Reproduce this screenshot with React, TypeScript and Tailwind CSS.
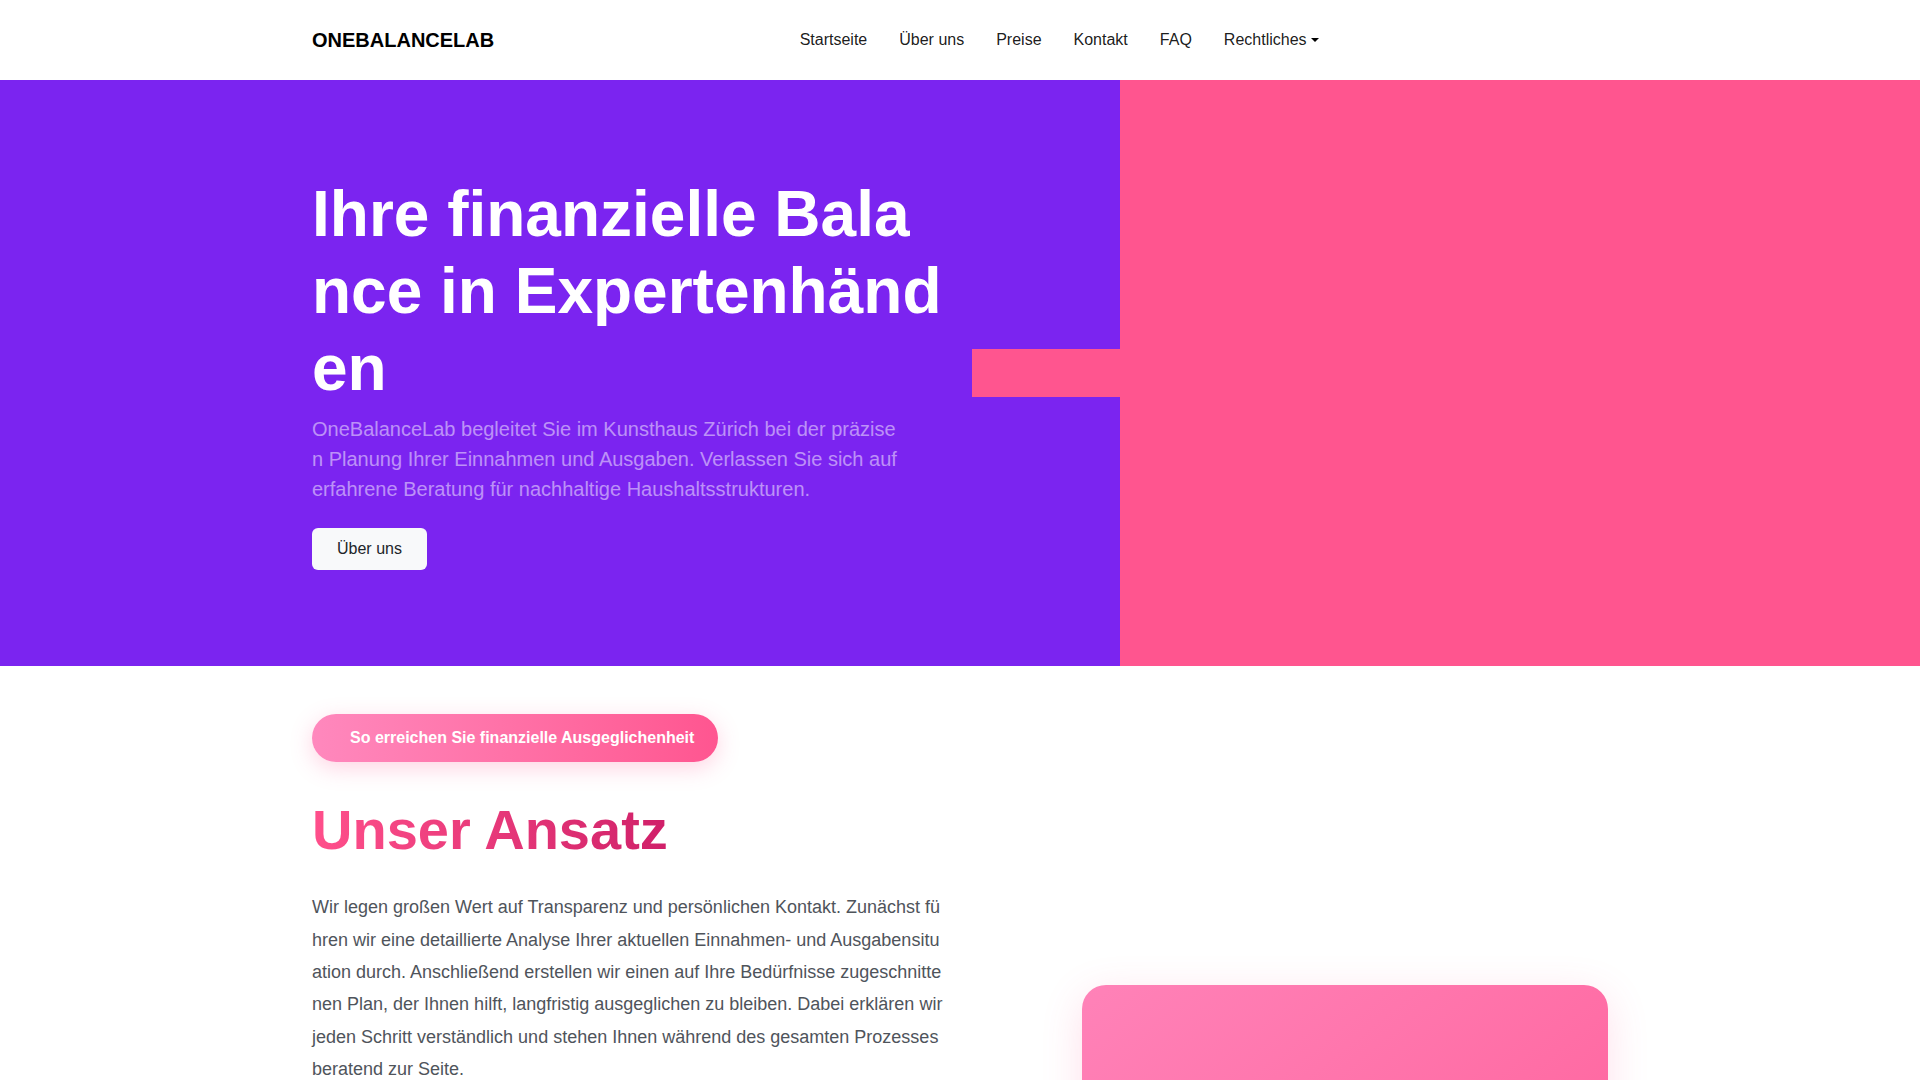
import React from "react";

export default function App() {
  const links = ["Startseite", "Über uns", "Preise", "Kontakt", "FAQ"];
  return (
    <div className="min-h-screen bg-white font-['Liberation_Sans',Arial,sans-serif] text-[#212529]">
      {/* Navbar */}
      <nav className="h-20 bg-white">
        <div className="mx-auto flex h-full w-[1320px] items-center px-3">
          <a className="mr-4 text-[20px] font-bold leading-[30px] text-black">ONEBALANCELAB</a>
          <div className="flex flex-1">
            <ul className="mx-auto flex items-center text-[16px] leading-6 text-black/90">
              {links.map((l) => (
                <li key={l}>
                  <a className="block px-4 py-2">{l}</a>
                </li>
              ))}
              <li>
                <a className="flex items-center px-4 py-2">
                  Rechtliches
                  <span className="ml-[4px] inline-block h-0 w-0 border-x-[4.8px] border-t-[4.8px] border-x-transparent border-t-black" />
                </a>
              </li>
            </ul>
          </div>
        </div>
      </nav>

      {/* Hero */}
      <section className="flex h-[586px]">
        <div className="flex flex-1 bg-[#7b24f0]">
          <div className="ml-[312px] w-[636px] pt-24">
            <h1 className="mb-2 break-all text-[64px] font-bold leading-[1.2] text-white">
              Ihre finanzielle Balance in Expertenhänden
            </h1>
            <p className="mb-6 max-w-[590px] break-all text-[20px] leading-[1.5] text-white/50">
              OneBalanceLab begleitet Sie im Kunsthaus Zürich bei der präzisen Planung Ihrer Einnahmen und Ausgaben. Verlassen Sie sich auf erfahrene Beratung für nachhaltige Haushaltsstrukturen.
            </p>
            <button className="rounded-[6px] bg-[#f8f9fa] px-[25px] py-[9px] text-[16px] leading-6 text-[#212529]">
              Über uns
            </button>
          </div>
          <div className="flex flex-1 justify-end">
            <div className="mt-[269px] h-12 w-[148px] bg-[#ff558f]" />
          </div>
        </div>
        <div className="w-[800px] bg-[#ff558f]" />
      </section>

      {/* Approach section */}
      <section className="py-12">
        <div className="mx-auto flex w-[1320px] px-3">
          <div className="w-[636px]">
            <div className="inline-flex items-center rounded-full bg-gradient-to-r from-[#ff88bd] to-[#ff5590] py-3 pl-[38px] pr-6 text-[16px] font-bold leading-6 text-white shadow-[0_6px_22px_rgba(255,85,144,0.25)]">
              So erreichen Sie finanzielle Ausgeglichenheit
            </div>
            <div className="mt-[34px]">
              <h2 className="inline-block bg-gradient-to-r from-[#ff4f8b] to-[#d01f69] bg-clip-text text-[56px] font-bold leading-[1.2] text-transparent">
                Unser Ansatz
              </h2>
            </div>
            <p className="mt-[28px] break-all text-[18px] leading-[1.8] text-[#4f545b]">
              Wir legen großen Wert auf Transparenz und persönlichen Kontakt. Zunächst führen wir eine detaillierte Analyse Ihrer aktuellen Einnahmen- und Ausgabensituation durch. Anschließend erstellen wir einen auf Ihre Bedürfnisse zugeschnittenen Plan, der Ihnen hilft, langfristig ausgeglichen zu bleiben. Dabei erklären wir jeden Schritt verständlich und stehen Ihnen während des gesamten Prozesses beratend zur Seite.
            </p>
          </div>
          <div className="ml-auto w-[526px]">
            <div className="mt-[271px] h-[420px] rounded-[24px] bg-gradient-to-br from-[#ff82b8] to-[#ff5a96] shadow-[0_10px_40px_rgba(255,85,144,0.18)]" />
          </div>
        </div>
      </section>
    </div>
  );
}
